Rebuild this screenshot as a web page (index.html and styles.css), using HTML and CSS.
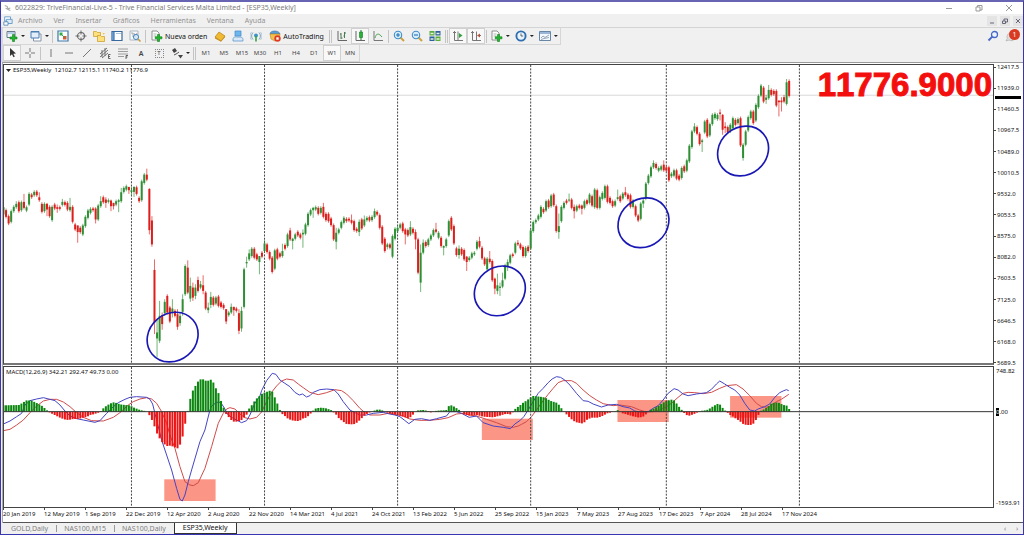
FILE: index.html
```html
<!DOCTYPE html>
<html lang="es">
<head>
<meta charset="utf-8">
<title>ESP35,Weekly</title>
<link rel="stylesheet" href="styles.css">
</head>
<body>
<svg class="defs" aria-hidden="true">
  <symbol id="i-docplus" viewBox="0 0 12 12"><path d="M1 1h5l2 2v7H1z" fill="#fff" stroke="#777" stroke-width=".8"/><path d="M2.500 4h3M2.500 6h3" stroke="#999" stroke-width=".7"/><path d="M6.500 4.500h2v2.300H11v2h-2.500v2.700h-2V8.800H4.200v-2h2.300z" fill="#22b52e" stroke="#0c8019" stroke-width=".6"/></symbol>
</svg>
<div class="app">
  <header class="titlebar">
    <svg class="ico small" viewBox="0 0 10 10"><path d="M1 2l3 1 1 3 3-1M2 5l3 2 3 1" fill="none" stroke="#aaa" stroke-width="1.300"/></svg>
    <h1 class="title">6022829: TriveFinancial-Live-5 - Trive Financial Services Malta Limited - [ESP35,Weekly]</h1>
    <div class="winctl">
      <button aria-label="Minimizar"><svg viewBox="0 0 8 8"><path d="M1 4.500h6"/></svg></button>
      <button aria-label="Restaurar"><svg viewBox="0 0 8 8"><path d="M1 3h4v4H1zM2.500 3V1.500H7V6H5"/></svg></button>
      <button aria-label="Cerrar"><svg viewBox="0 0 8 8"><path d="M1 1l6 6M7 1L1 7"/></svg></button>
    </div>
  </header>

  <nav class="menubar">
    <svg class="ico menuicon" viewBox="0 0 12 12"><path d="M2 1h7v5H2z" fill="#fff" stroke="#5b94c4"/><path d="M4 4h7v5H4z" fill="#dcebf7" stroke="#5b94c4"/><path d="M1 7h5v4H1z" fill="#fff" stroke="#4d84b5"/></svg>
    <button>Archivo</button><button>Ver</button><button>Insertar</button><button>Gráficos</button><button>Herramientas</button><button>Ventana</button><button>Ayuda</button>
    <div class="docctl">
      <button aria-label="Minimizar gráfico"><svg viewBox="0 0 8 8"><path d="M2 6h4"/></svg></button>
      <button aria-label="Restaurar gráfico"><svg viewBox="0 0 8 8"><path d="M1.500 4h3v2.500h-3zM3 4V2h3.500v3H4.500"/></svg></button>
      <button aria-label="Cerrar gráfico"><svg viewBox="0 0 8 8"><path d="M2 2l4 4M6 2L2 6"/></svg></button>
    </div>
  </nav>

  <div class="toolrow">
    <div class="toolbar">
      <button class="btn" aria-label="Nuevo gráfico"><svg viewBox="0 0 12 12"><path d="M1 1.500h8v6H1z" fill="#eef4fb" stroke="#66788a"/><path d="M2 3h6" stroke="#7da7cf"/><path d="M6.500 4.500h2V7H11v2H8.500v2.500h-2V9H4V7h2.500z" fill="#22b52e" stroke="#0c8019" stroke-width=".6"/></svg></button>
      <span class="caret"></span>
      <button class="btn" aria-label="Perfiles"><svg viewBox="0 0 12 12"><path d="M3.500 4h7.500v7H3.500z" fill="#fff" stroke="#8795a5"/><path d="M1 1.500h8v6.500H1z" fill="#e3eefa" stroke="#4a7fb5"/><path d="M1 2h8" stroke="#4a7fb5"/></svg></button>
      <span class="caret"></span>
      <span class="sep"></span>
      <button class="btn" aria-label="Observación de mercado"><svg viewBox="0 0 12 12"><path d="M1 1h10v10H1z" fill="#fff" stroke="#3e78ad" stroke-width="1.200"/><path d="M2.500 2.500h3v3h-3z" fill="#2fae4a"/><path d="M6 6h3.500v3.500H6z" fill="#e0552d"/><path d="M4 4l4 4" stroke="#3aa24a"/></svg></button>
      <button class="btn" aria-label="Ventana de datos"><svg viewBox="0 0 12 12"><circle cx="6" cy="6" r="3.500" fill="none" stroke="#666" stroke-width="1.100"/><path d="M6 .5v4M6 7.500v4M.5 6h4M7.500 6h4" stroke="#666"/></svg></button>
      <button class="btn" aria-label="Navegador"><svg viewBox="0 0 12 12"><path d="M.5 1.500h3l1 1h3v4h-7z" fill="#ffe07a" stroke="#c69a24" stroke-width=".7"/><path d="M4.500 5.500h3l1 1h3v5h-7z" fill="#ffe07a" stroke="#c69a24" stroke-width=".7"/><path d="M9 1l1 2 2 .3-1.500 1.500" fill="#f5b928"/></svg></button>
      <button class="btn" aria-label="Terminal"><svg viewBox="0 0 12 12"><path d="M1 1.500h10v9H1z" fill="#fff" stroke="#38689c" stroke-width="1.200"/><path d="M1.500 2h2.200v8H1.500z" fill="#4f8ccb"/><path d="M5 3.500h5" stroke="#a8c3de"/></svg></button>
      <button class="btn" aria-label="Probador de estrategias"><svg viewBox="0 0 12 12"><path d="M1 1h8v9H1z" fill="#f7fafc" stroke="#9aa8b5" stroke-width=".8"/><path d="M2 3h2v4M5 3l1 4 2-4" fill="none" stroke="#888" stroke-width=".7"/><circle cx="7" cy="7" r="2.600" fill="#cfe6f8" fill-opacity=".8" stroke="#4d8bc0"/><path d="M9 9l2.500 2.500" stroke="#c99a35" stroke-width="1.500"/></svg></button>
      <span class="sep"></span>
      <button class="btn label"><svg viewBox="0 0 12 12"><use href="#i-docplus"/></svg>Nueva orden</button>
      <button class="btn" aria-label="MetaEditor"><svg viewBox="0 0 12 12"><path d="M1 7l4-5 6 4-4 5z" fill="#f0bb32" stroke="#b57d12" stroke-width=".7"/><path d="M1 7v1.500l6 3.300 4-4.500V6l-4 5z" fill="#c98c18"/></svg></button>
      <button class="btn" aria-label="MQL5"><svg viewBox="0 0 12 12"><path d="M3 1h6v5H3z" fill="#6db7ee" stroke="#3f86c7" stroke-width=".7"/><path d="M1 10c0-4 3-3 4-3h3c3 0 3 2 3 4H1z" fill="#d9e9f7" stroke="#5c95cc" stroke-width=".8"/></svg></button>
      <button class="btn" aria-label="Señales"><svg viewBox="0 0 12 12"><g fill="none" stroke="#7ea6c4" stroke-width="1"><path d="M3 9.500a5 5 0 0 1 0-7M9 9.500a5 5 0 0 0 0-7"/><path d="M1.500 10a6.500 6.500 0 0 1 0-8M10.500 10a6.500 6.500 0 0 0 0-8" stroke="#b3c8d8"/></g><circle cx="6" cy="5.500" r="2" fill="#3e93c9"/><path d="M6 6v5.500" stroke="#39a33e" stroke-width="1.600"/></svg></button>
      <button class="btn label"><svg viewBox="0 0 12 12"><path d="M1 4c0-4 9-4 10 0z" fill="#5a9fd8" stroke="#34699d" stroke-width=".6"/><path d="M1 4h10l-1 5-4 2-4-2z" fill="#f2c14d" stroke="#b88625" stroke-width=".6"/><circle cx="8.500" cy="8.500" r="3.200" fill="#df3b22"/><path d="M7.300 7.300h2.400v2.400H7.300z" fill="#fff"/></svg>AutoTrading</button>
      <span class="sep double"></span>
      <button class="btn" aria-label="Barras"><svg viewBox="0 0 12 12"><path d="M2 1v9.500h9" fill="none" stroke="#666"/><path d="M5 3v6M4 4h1M5 8h1.500M8.500 2v6M7.500 6h1M8.500 3H10" stroke="#4d7a52"/></svg></button>
      <button class="btn pressed" aria-label="Velas"><svg viewBox="0 0 12 12"><path d="M2 1v9.500h9" fill="none" stroke="#666"/><path d="M7 0v10" stroke="#1c7f28"/><path d="M5.500 2h3v5.500h-3z" fill="#29b237" stroke="#137a20" stroke-width=".6"/></svg></button>
      <button class="btn" aria-label="Línea"><svg viewBox="0 0 12 12"><path d="M2 1v9.500h9" fill="none" stroke="#777"/><path d="M3 8c1-5 4-5 7-1" fill="none" stroke="#4ba356"/></svg></button>
      <span class="sep"></span>
      <button class="btn" aria-label="Acercar"><svg viewBox="0 0 12 12"><path d="M7.500 7.500l3.500 3.500" stroke="#cda23a" stroke-width="2"/><circle cx="5" cy="5" r="3.700" fill="#d8edfb" stroke="#3f8cc8" stroke-width="1.100"/><path d="M3 5h4M5 3v4" stroke="#2272b4" stroke-width="1.100"/></svg></button>
      <button class="btn" aria-label="Alejar"><svg viewBox="0 0 12 12"><path d="M7.500 7.500l3.500 3.500" stroke="#cda23a" stroke-width="2"/><circle cx="5" cy="5" r="3.700" fill="#d8edfb" stroke="#3f8cc8" stroke-width="1.100"/><path d="M3 5h4" stroke="#2272b4" stroke-width="1.100"/></svg></button>
      <button class="btn" aria-label="Mosaico"><svg viewBox="0 0 12 12"><path d="M.5 1h5v4.500h-5zM6.500 6.500h5V11h-5z" fill="#5aad3b"/><path d="M6.500 1h5v4.500h-5zM.5 6.500h5V11h-5z" fill="#2e5f9c"/><path d="M1.500 3.500h3M7.500 3.500h3M1.500 9h3M7.500 9h3" stroke="#e4f1dd" stroke-width="1.300"/></svg></button>
      <span class="sep double"></span>
      <button class="btn pressed" aria-label="Desplazamiento automático"><svg viewBox="0 0 12 12"><path d="M2.500 1v9.500H11M1 2.500h3M6 1.500v9" fill="none" stroke="#777"/><path d="M7 3l3.500 2.500L7 8z" fill="#2ea43a"/></svg></button>
      <button class="btn pressed" aria-label="Desplazar gráfico"><svg viewBox="0 0 12 12"><path d="M2.500 1v9.500H11M1 2.500h3M6.500 1.500v9M8 5.500h3" fill="none" stroke="#777"/><path d="M10 3.500L7 5.500l3 2z" fill="#b3523e"/></svg></button>
      <span class="sep"></span>
      <button class="btn" aria-label="Indicadores"><svg viewBox="0 0 12 12"><use href="#i-docplus"/></svg></button>
      <span class="caret"></span>
      <button class="btn" aria-label="Periodicidad"><svg viewBox="0 0 12 12"><circle cx="6" cy="6" r="4.600" fill="#eaf4fc" stroke="#2f6fb0" stroke-width="1.900"/><path d="M6 3.500V6h2.200" fill="none" stroke="#555" stroke-width=".9"/></svg></button>
      <span class="caret"></span>
      <button class="btn" aria-label="Plantillas"><svg viewBox="0 0 12 12"><path d="M.5 1.500h11v9H.5z" fill="#f4f8fc" stroke="#6887a6"/><path d="M1 3h10" stroke="#5a8bc0" stroke-width="1.200"/><path d="M2 8l2-2 2 1.500L10 5M2 9.500l3-1 5-1" fill="none" stroke="#7c93a8" stroke-width=".8"/></svg></button>
      <span class="caret"></span>
    </div>
    <div class="status">
      <button class="btn" aria-label="Buscar"><svg viewBox="0 0 12 12"><circle cx="7.500" cy="4.500" r="3" fill="#eef3fd" stroke="#4668c8" stroke-width="1.300"/><path d="M5.300 6.700L1.500 10.500" stroke="#4668c8" stroke-width="1.900"/></svg></button>
      <button class="btn chat" aria-label="Mensajes"><svg viewBox="0 0 12 12"><path d="M5 3a4 4 0 1 1-1 7l-3 1 1.300-2.500A4 4 0 0 1 5 3z" fill="#dedede" stroke="#b5b5b5" stroke-width=".8"/></svg><span class="badge">1</span></button>
    </div>
  </div>

  <div class="toolrow">
    <div class="toolbar">
      <button class="btn pressed" aria-label="Cursor"><svg viewBox="0 0 12 12"><path d="M4 1v8l2-1.700 1.500 3 1.300-.7-1.500-2.800L10 6.500z" fill="#333"/></svg></button>
      <button class="btn" aria-label="Cruz"><svg viewBox="0 0 12 12"><path d="M6 1v4M6 7v4M1 6h4M7 6h4" stroke="#777"/></svg></button>
      <span class="sep"></span>
      <button class="btn" aria-label="Línea vertical"><svg viewBox="0 0 12 12"><path d="M6 2v8" stroke="#777"/></svg></button>
      <button class="btn" aria-label="Línea horizontal"><svg viewBox="0 0 12 12"><path d="M2 6h8" stroke="#777"/></svg></button>
      <button class="btn" aria-label="Línea de tendencia"><svg viewBox="0 0 12 12"><path d="M2 10l8-8" stroke="#777"/></svg></button>
      <button class="btn" aria-label="Canal"><svg viewBox="0 0 12 12"><path d="M1 7l7-6M1 10l8-7M3 11l6-5M3 3v7M6 1v8" stroke="#666" stroke-width=".9"/><path d="M11.500 7.500H9.500v4h2M9.500 9.500h1.500" fill="none" stroke="#444" stroke-width=".8"/></svg></button>
      <button class="btn" aria-label="Fibonacci"><svg viewBox="0 0 12 12"><path d="M1 2h10M1 4.500h10M1 7h10M1 9.500h6" stroke="#888" stroke-width=".8"/><path d="M11 8.500H9v3.500M9 10h1.500" fill="none" stroke="#444" stroke-width=".8"/></svg></button>
      <button class="btn glyph letter">A</button>
      <button class="btn glyph" aria-label="Etiqueta de texto"><span class="tbox">T</span></button>
      <button class="btn" aria-label="Flechas"><svg viewBox="0 0 12 12"><path d="M1 3l3-2 2 3-3 2zM7 8h5l-2.500 3.500z" fill="#444"/><path d="M3 8l3-1.500L8 5" stroke="#555" fill="none"/></svg></button>
      <span class="caret"></span>
      <span class="sep double"></span>
      <button class="btn glyph">M1</button><button class="btn glyph">M5</button><button class="btn glyph">M15</button><button class="btn glyph">M30</button><button class="btn glyph">H1</button><button class="btn glyph">H4</button><button class="btn glyph">D1</button><button class="btn glyph pressed">W1</button><button class="btn glyph">MN</button>
    </div>
  </div>

  <main class="workspace">
    <section class="pane price">
      <svg class="plot" id="price" viewBox="12 195 2968 897" preserveAspectRatio="none"></svg>
      <p class="caption"><span class="caret"></span>ESP35,Weekly&nbsp; 12102.7 12115.1 11740.2 11776.9</p>
      <strong class="quote">11776.9000</strong>
    </section>
    <div class="axis price-axis">
      <span>12417.5</span><span>11939.0</span><span>11460.5</span><span>10967.5</span><span>10489.0</span><span>10010.5</span><span>9532.0</span><span>9053.5</span><span>8575.0</span><span>8082.0</span><span>7603.5</span><span>7125.0</span><span>6646.5</span><span>6168.0</span><span>5689.5</span>
      <i class="marker"></i>
    </div>
    <section class="pane macd">
      <svg class="plot" id="macd" viewBox="12 1101 2968 420" preserveAspectRatio="none"></svg>
      <p class="caption">MACD(12,26,9) 342.21 292.47 49.73 0.00</p>
    </section>
    <div class="axis macd-axis">
      <span>748.82</span><span class="zero"><b>0</b>.00</span><span>-1593.91</span>
    </div>
    <ol class="dates">
      <li>20 Jan 2019</li><li>12 May 2019</li><li>1 Sep 2019</li><li>22 Dec 2019</li><li>12 Apr 2020</li><li>2 Aug 2020</li><li>22 Nov 2020</li><li>14 Mar 2021</li><li>4 Jul 2021</li><li>24 Oct 2021</li><li>13 Feb 2022</li><li>5 Jun 2022</li><li>25 Sep 2022</li><li>15 Jan 2023</li><li>7 May 2023</li><li>27 Aug 2023</li><li>17 Dec 2023</li><li>7 Apr 2024</li><li>28 Jul 2024</li><li>17 Nov 2024</li>
    </ol>
  </main>

  <footer class="tabs">
    <button>GOLD,Daily</button><button>NAS100,M15</button><button>NAS100,Daily</button><button class="active">ESP35,Weekly</button>
    <div class="scroll"><button aria-label="Anterior">‹</button><button aria-label="Siguiente">›</button></div>
  </footer>
</div>
<script src="chart.js"></script>
</body>
</html>
```
FILE: styles.css
```css
* { box-sizing: border-box; }
body { margin: 0; font-family: "Noto Sans", "Open Sans", sans-serif; font-size: 7px; color: #222; }
button { border: 0; padding: 0; margin: 0; background: none; font: inherit; color: inherit; }
.defs { display: none; }
.app { height: 100vh; display: flex; flex-direction: column; background: #f0f0f0; border: 1px solid #3a35b0; border-top: 2px solid #6864b4; overflow: hidden; }

.titlebar { display: flex; align-items: center; height: 12px; padding-left: 3px; background: #fff; color: #7c7c7c; }
.ico { width: 10px; height: 10px; }
.small { width: 8px; height: 8px; margin-right: 3px; }
.title { margin: 0; font-size: 7px; line-height: 12px; font-weight: 400; flex: 1; }
.winctl { display: flex; gap: 12px; padding-right: 5px; }
.winctl button { width: 18px; height: 12px; display: grid; place-items: center; }
.winctl svg, .docctl svg { width: 8px; height: 8px; fill: none; stroke: #999; stroke-width: 1; }

.menubar { display: flex; align-items: center; gap: 11px; height: 14px; padding-left: 2px; color: #929292; border-bottom: 1px solid #d4d4d4; }
.menuicon { margin-right: -6px; }
.docctl { display: flex; gap: 3px; margin-left: auto; }
.docctl button { width: 10px; height: 10px; display: grid; place-items: center; background: #e4e4e4; }
.docctl svg { stroke: #667; }

.toolrow { display: flex; justify-content: space-between; height: 17px; }
.toolbar { display: flex; align-items: center; padding-left: 2px; border: 1px solid #d6d6d6; border-width: 0 1px 1px 0; box-shadow: inset 2px 0 0 #d9d9d9; }
.btn { width: 18px; height: 16px; display: flex; align-items: center; justify-content: center; flex: none; }
.btn svg { width: 12px; height: 12px; flex: none; }
.btn.label { width: auto; padding: 0 4px; gap: 2px; color: #111; }
.pressed { background: #f8f8f8; box-shadow: inset 0 0 0 1px #d0d0d0; }
.caret { flex: none; width: 4px; height: 2px; background: #222; clip-path: polygon(0 0, 100% 0, 50% 100%); margin-right: 2px; }
.sep { flex: none; width: 1px; height: 13px; margin: 0 1px; background: #c4c4c4; }
.sep.double { width: 3px; background: none; border: 1px solid #c4c4c4; border-width: 0 1px; }
.glyph { font-size: 6px; color: #444; }
.letter { font-size: 7px; font-weight: 600; }
.tbox { width: 9px; height: 9px; border: 1px dotted #888; line-height: 7px; }
.status { display: flex; padding-right: 3px; }
.chat { position: relative; }
.badge { position: absolute; top: 1px; right: 0; width: 11px; height: 11px; border-radius: 50%; background: #d93a22; color: #fff; line-height: 11px; text-align: center; }

.workspace { flex: 1; min-height: 0; display: grid; grid-template-columns: minmax(0, 1fr) 29px; grid-template-rows: minmax(0, 302fr) minmax(0, 142fr) 15px; margin-left: 1px; padding-top: 1px; background: #fff; border-top: 1px solid #999; border-left: 1px solid #aaa; }
.pane { position: relative; border: 1px solid #444; overflow: hidden; }
.price { border-bottom: 2px solid #777; margin-bottom: 1px; }
.plot { display: block; width: 100%; height: 100%; }
.caption { position: absolute; top: 2px; left: 2px; margin: 0; display: flex; align-items: center; font-size: 6px; line-height: 7px; color: #111; }
.caption .caret { width: 5px; height: 3px; }
.quote { position: absolute; top: 4px; right: 1px; font-family: "Liberation Sans", Arial, sans-serif; font-weight: 700; font-size: 33px; line-height: 32px; font-kerning: none; color: #f40f0f; -webkit-text-stroke: 1px #f40f0f; }
.axis { position: relative; display: flex; flex-direction: column; justify-content: space-between; font-size: 6px; line-height: 6px; color: #111; }
.price-axis span { display: flex; align-items: center; }
.price-axis span::before { content: ""; width: 2px; height: 1px; margin-right: 1px; background: #444; }
.marker { position: absolute; left: 1px; right: 2px; top: 32px; height: 3px; background: #000; }
.macd-axis { padding: 2px 0 2px 2px; justify-content: flex-start; }
.macd-axis .zero { margin-top: 35px; margin-bottom: auto; }
.zero b { font-weight: 400; background: #000; color: #fff; }
.dates { grid-column: 1 / -1; display: grid; grid-template-columns: repeat(20, 4.02%); margin: 0; padding: 0; list-style: none; font-size: 6px; line-height: 8px; color: #111; border-bottom: 1px solid #555; white-space: nowrap; }
.dates li { padding-top: 2px; background: linear-gradient(#444, #444) no-repeat 0 0 / 1px 2px; }

.tabs { display: flex; height: 11px; padding-left: 2px; line-height: 10px; color: #808080; }
.tabs > button { position: relative; padding: 0 8px; }
.tabs > button + button::before { content: ""; position: absolute; left: 0; top: 2px; bottom: 2px; width: 1px; background: #999; }
.tabs > .active { background: #fff; color: #111; border: 1px solid #333; border-top: 0; }
.tabs > .active::before { display: none; }
.tabs > .scroll { margin-left: auto; display: flex; }
.scroll button { width: 12px; }
```
FILE: chart.js
```js
// Plot units are thirds of a pixel. One weekly bar is STEP units wide.
const STEP = 7.68, FIRST = 10.5;
const NS = "http://www.w3.org/2000/svg";
const YEARS = [50, 102, 154, 206, 259, 311];

// Each bar: colour, body top, body bottom, then optional wick top and bottom.
const BARS = [
  [480, `g143,165 r152,172 r170,192 g155,187 g142,155 g133,143,125 r128,155 g128,152 r127,145,103 g143,153
  g103,135 r105,113 g97,107 r96,107 r113,122,98 r133,157 g133,155 r133,150,130,170 r142,170 g142,182
  r135,147 r143,148,135,160 r143,148 g127,136,118 r128,136 r130,150 g142,152,115 r142,187 r195,210 r198,218,198,250
  r205,218 g198,225 g172,200 g153,175 g148,160 r147,152 r147,180,143,192 g138,180 g125,140,110 r113,128
  r120,130,113,145 g122,127 r123,140,120,155 r130,140,130,150 g125,135 g122,127,118,158 g98,125,85 g85,97 g80,90 r82,92,82,103
  g92,97,82,108 g82,97,80,112 r83,103 r115,125 g65,122 g45,70 r45,60,27 r88,212,86,225 r183,255,170,262 r332,490,300,525
  g520,538,480,595 g470,545,425,552 r468,495,460,512 g428,462,420,470 r410,460 r445,487 g448,460,420,475 r455,470 r465,503,450,512 g470,492,460,500
  g420,458,405,470 g320,405 r325,400,303 g380,418,355,428 r385,415,370,425 g385,410,375,420 r362,395,352 g375,385,365 r378,395,348,405 r400,448
  g445,453,430,462 g413,437,398,447 r415,437 g415,433 r412,440 r430,443 r437,447 r450,487,450,495 g460,468 g443,460,433
  r443,453,443,470 r448,455 r462,515,450,525 g455,508,443,518 g330,443 g308,312,292,325 g282,300,270 g268,290 r268,295 r285,300
  g290,308,290,345 r280,292`],
  [540, `g192,215,182 r195,218 r218,238 r235,278 g213,268 r210,238 r222,232 g215,230,193 r197,208 g165,200
  r153,180,145 g178,185,175,210 g165,178 r157,168 r165,175 g160,165,150,205 g135,163 g103,137 g92,105 g85,92,82,115
  g83,90 r85,103 g85,100 r82,112,70 r103,122 r103,125 r117,137 r137,180 g160,187,145,210 g150,160
  g128,145 g115,130 r118,125 r118,123 r122,130,105 r125,152 r148,155 g127,158,120,170 r120,147 g120,138,108
  g115,122 r113,123 g112,122 g95,113,87 r97,105 r107,145 r142,192 r178,215 g195,203,190,210 r195,205
  g170,232 g148,178 g145,155 g135,145 r132,155 r150,165,145,195 r152,168 g143,165,125 r148,160 r158,180,150,210
  r180,280 g220,310,195,338 g190,220,180 r188,200 g180,197 g168,180 g152,168 r150,157,130 g160,175 r175,200
  g200,205,198,228 g180,200 g125,168 r115,150 r140,192 r207,227 g208,227,198,238 r208,225 r212,240 r232,248,230,275
  g235,242 g222,235 g220,225 g187,208 r185,202,172 r205,237 r237,255 g238,270 r238,248,215 r245,303
  r298,328,295,345 g318,335,283,345 g322,326,310,350 g303,322,280 g258,298 g248,260,240,275 g228,250 r225,230 g192,220 r190,195,182`],
  [390, `r345,357 r353,380 g355,380 r352,365 g303,357 g278,305 g272,278 g258,270
  g232,262 r238,248 g215,243 r213,233 g198,230 r195,227 r230,305 g290,308,252,328 g232,275 g220,235
  r213,220 g210,213,192 r210,235 r232,245,225,267 g230,243 r228,235 r228,238,225,255 g215,235 r212,223 g195,220
  r200,228 g180,233 r182,235 g203,235 g190,208 g170,205 r170,217 r205,220 r215,230 g215,228
  g203,208,180 r200,215 g192,207 r188,197,172 r195,208 r197,232 g213,232 r230,258 r258,273 g222,268
  g213,222,205,235 g162,207 g138,160 g113,140 g100,113,92 r103,115 g115,123 g110,120 r105,122,92`],
  [195, `r308,318 r308,347 g327,335 g317,333 r317,342 r333,345 g310,340 r305,320 g287,318 g243,290
  g200,247 g185,200,175 r187,207 r207,238 g227,232,222,262 g170,203 r165,215 g178,212 g150,178 g147,160
  g150,163 r143,147,133,167 r150,195,148,210 r185,190,172,205 r187,203 g180,200 g160,190 r165,180 g163,175 r160,242
  g240,280,235,288 g200,240 g157,197 g140,160 r140,175 g120,167 g93,127 g62,92 r68,110 g98,105,90,117
  g75,100,60 r75,90 r78,88 r78,122 r107,112,107,155 r107,112,97,140 r97,110,90 g52,117,42 r48,93`]
];

// Series points are "x:y" pairs, grouped by horizontal origin.
const HIST = [
  [0, `10:19 60:20 65:25 80:34 95:33 110:26 125:18 137:8 145:0 150:-3 160:-8 172:-14 180:-18 190:-22 200:-25 210:-24 220:-22 235:-22 250:-18 262:-15 270:-10 280:-8 290:-5 300:-1 305:5 312:12 320:18 330:24 340:28 350:26 360:22 375:20 390:19 400:13 410:9 420:5 430:3 440:1 448:-10 456:-25 464:-45 471:-65 479:-80 487:-92 494:-98 502:-103 510:-102 517:-104 525:-107 533:-110 541:-98 548:-75 556:-35 564:5 571:38 579:64 587:78 594:90 602:97 610:97 617:93 625:93 633:96 640:88 648:70 656:55 664:30 671:12 679:-8 687:-17 694:-25 702:-30 710:-30 717:-28 725:-25 733:-17 741:-8 748:10 756:20 764:32 771:40 779:47`],
  [780, `5:53 14:57 22:60 30:63 37:60 45:42 52:25 60:5 68:-8 75:-13 83:-20 91:-24 100:-27 114:-28 121:-26 130:-20 140:-18 150:-8 158:1 165:9 180:12 195:11 205:8 215:4 222:-3 230:-10 237:-20 250:-30 260:-37 275:-38 285:-37 295:-30 305:-20 318:-8 330:-2 340:2 355:7 365:5 372:1 385:-4 400:-8 415:-10 430:-15 445:-20 455:-15 465:-1 475:4 490:5 505:2 515:-3 530:3 550:4 560:5 567:17 575:19 585:14 595:7 603:2 612:-8 630:-12 650:-10 670:-15 685:-16 700:-17 720:-12 740:-6 750:-9 758:-3 766:8 775:15`],
  [1560, `2:20 10:27 20:33 33:43 40:47 50:46 60:45 72:43 80:40 90:33 100:30 110:27 118:20 125:10 132:1 140:-8 150:-18 160:-27 170:-32 190:-36 200:-25 215:-18 235:-18 250:-12 262:-5 275:-2 285:1 295:5 305:-4 320:-8 340:-14 358:-18 370:-15 382:-5 390:4 400:8 410:14 420:20 430:27 440:32 455:36 465:33 472:22 480:12 487:4 495:-6 505:-13 515:-10 528:-5 540:2 555:4 565:6 575:13 585:19 595:24 603:20 612:6 620:1 628:-8 640:-15 650:-22 660:-28 668:-36 680:-40 692:-40 700:-37 708:-26 715:-12 722:2 735:8 745:15 755:24 768:28 780:26 790:20 800:19 808:8`]
];
const MACD = [
  [0, `10:192 30:183 50:170 65:160 75:135 90:122 110:117 130:113 150:118 165:122 180:135 195:153 210:168 230:176 250:180 285:187 300:182 320:160 340:140 355:128 375:118 390:112 410:110 440:112 450:118 458:132 470:180 485:240 500:285 515:330 530:385 540:418 547:423 555:405 565:365 575:330 600:245 615:210 630:150 635:138 650:127 662:127 672:142 685:165 700:175 725:188 740:182 750:165 765:130 780:108`],
  [780, `5:92 20:62 37:40 48:43 60:60 75:70 90:80 105:97 118:105 128:102 140:111 150:107 160:97 180:89 200:87 222:89 235:102 250:125 270:150 285:158 300:165 320:165 340:160 370:157 385:161 405:165 420:170 433:180 447:191 465:178 485:176 510:181 530:176 560:168 570:155 590:155 605:160 628:172 650:168 670:188 700:198 730:202 752:206 765:192`],
  [1560, `0:182 12:170 25:150 40:125 55:100 70:85 85:68 97:57 110:50 122:52 135:60 150:75 170:100 190:122 205:124 220:132 245:141 265:135 290:133 310:140 330:144 345:153 365:157 385:155 400:145 415:137 430:120 445:100 463:86 475:90 490:102 505:107 530:102 560:98 575:88 590:72 600:63 615:72 630:82 645:90 660:105 675:130 690:150 705:153 715:147 735:140 750:132 765:112 780:98 790:93 800:89 807:92`]
];
const SIGNAL = [
  [0, `10:212 30:208 50:195 70:180 90:158 110:138 130:123 150:118 170:118 190:126 210:140 230:158 250:172 275:182 310:183 340:172 360:158 385:135 400:125 420:117 440:113 455:117 470:130 485:155 500:190 510:225 525:265 540:320 555:365 570:375 580:377 595:368 615:325 635:260 655:190 670:160 680:147 690:143 705:147 720:162 735:173 750:177 770:172`],
  [780, `5:156 20:125 35:97 50:78 65:63 80:57 100:60 115:72 130:83 150:97 175:104 200:98 225:89 245:92 260:102 280:122 300:145 315:158 330:165 360:165 385:160 410:164 430:168 450:177 480:181 510:181 540:178 565:173 590:162 610:160 630:165 650:168 680:178 710:188 740:200 760:202 775:198`],
  [1560, `5:193 20:185 35:170 50:150 70:122 85:103 100:85 115:68 130:62 155:62 170:70 190:90 210:107 230:120 250:131 280:137 300:135 335:140 360:150 380:156 400:155 420:150 440:140 455:130 475:112 490:100 505:97 525:98 550:101 575:97 600:85 620:77 650:74 670:87 690:107 710:130 725:140 745:142 755:135 770:125 785:118 807:103`]
];

const price = document.getElementById("price");
const macd = document.getElementById("macd");

function add(parent, tag, attrs) {
  const el = document.createElementNS(NS, tag);
  for (const key in attrs) el.setAttribute(key, attrs[key]);
  parent.appendChild(el);
}
function points(series) {
  return series.flatMap(([origin, text]) =>
    text.trim().split(/\s+/).map(p => p.split(":").map(Number)).map(([x, y]) => [x + origin, y]));
}
function valueAt(list, x) {
  const k = list.findIndex(p => p[0] >= x);
  if (k === -1) return list[list.length - 1][1];
  if (k === 0) return list[0][1];
  const [x0, y0] = list[k - 1], [x1, y1] = list[k];
  return y0 + (y1 - y0) * (x - x0) / (x1 - x0);
}
function yearLines(svg, top, bottom) {
  for (const i of YEARS) {
    const x = FIRST + STEP * i;
    add(svg, "path", { d: `M${x} ${top}V${bottom}`, stroke: "#444", "stroke-width": 3, "stroke-dasharray": "6 4" });
  }
}

add(price, "path", { d: "M0 286H3000", stroke: "#d8d8d8", "stroke-width": 3 });
yearLines(price, 195, 1092);
let index = 0;
for (const [origin, text] of BARS) {
  for (const bar of text.trim().split(/\s+/)) {
    const colour = bar[0] === "g" ? "#2f8f35" : "#dc1f1c";
    const [top, bottom, high = top - 5, low = bottom + 5] = bar.slice(1).split(",").map(Number);
    const x = FIRST + STEP * index++;
    add(price, "path", { d: `M${x} ${high + origin}V${low + origin}`, stroke: colour, "stroke-width": 2 });
    add(price, "rect", { x: x - 3, y: top + origin, width: 6, height: bottom - top, fill: colour });
  }
}
for (const [cx, cy] of [[518, 1014], [1500, 875], [1931, 670], [2230, 454]]) {
  add(price, "ellipse", { cx, cy, rx: 80, ry: 71, transform: `rotate(-40 ${cx} ${cy})`, fill: "none", stroke: "#1a18b4", "stroke-width": 5 });
}

const ZERO = 1235;
for (const [x, y, width, height] of [[493, 1438, 154, 65], [1446, 1256, 153, 64], [1853, 1200, 154, 66], [2191, 1188, 154, 65]]) {
  add(macd, "rect", { x, y, width, height, fill: "#fb9586" });
}
for (const [series, stroke] of [[SIGNAL, "#cf4a4a"], [MACD, "#4444c4"]]) {
  const line = points(series).map(([x, y]) => `${x},${y + 1080}`).join(" ");
  add(macd, "polyline", { points: line, fill: "none", stroke, "stroke-width": 3, "stroke-linejoin": "round" });
}
const hist = points(HIST);
for (let i = 0; i < 308; i++) {
  const x = FIRST + STEP * i, v = valueAt(hist, x);
  add(macd, "rect", { x: x - 3, y: ZERO - Math.max(v, 0), width: 6, height: Math.abs(v), fill: v > 0 ? "#0b870f" : "#ec1414" });
}
add(macd, "path", { d: `M0 ${ZERO}H3000`, stroke: "#333", "stroke-width": 3 });
yearLines(macd, 1101, 1521);
```
